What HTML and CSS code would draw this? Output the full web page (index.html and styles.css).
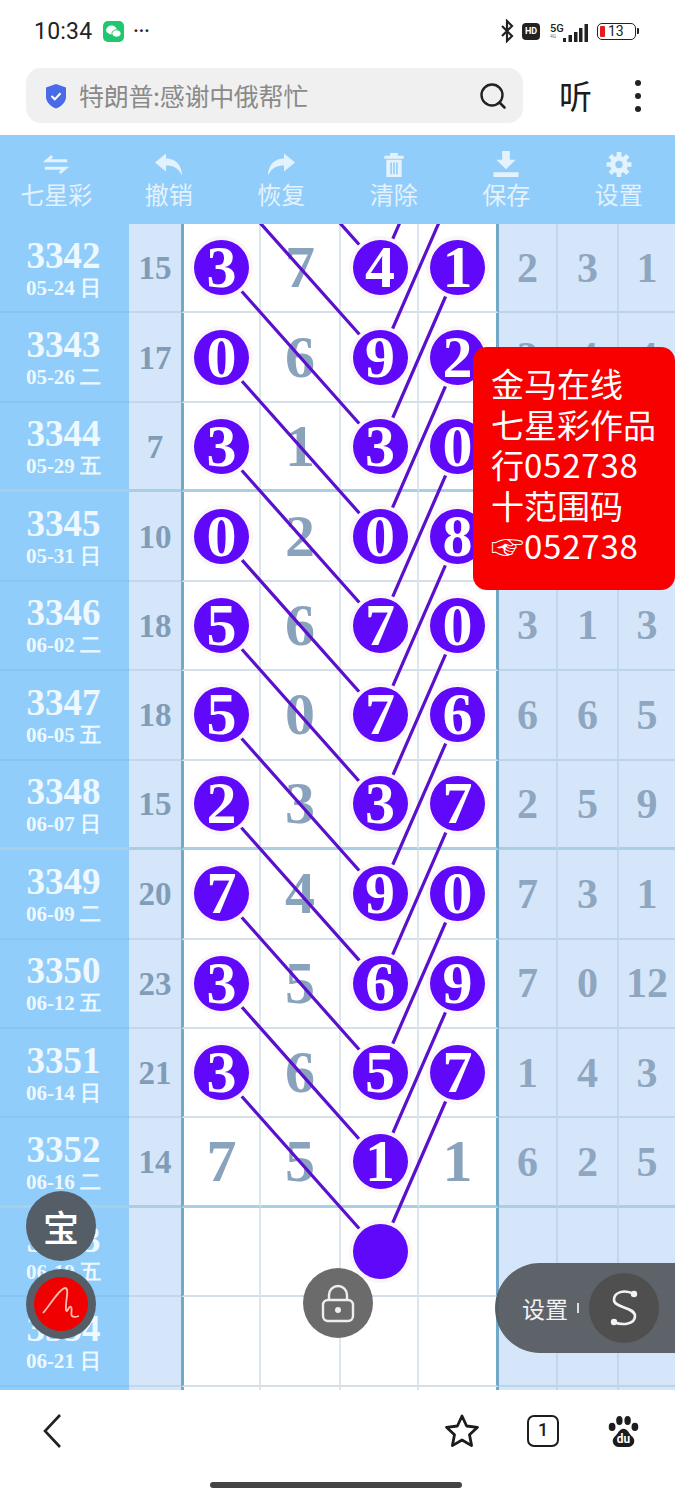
FILE: index.html
```html
<!DOCTYPE html>
<html lang="zh">
<head>
<meta charset="utf-8">
<title>七星彩</title>
<link rel="stylesheet" href="styles.css">
</head>
<body>
<div class="page">
  <header class="status">
    <span class="time">10:34</span>
    <svg class="wechat" viewBox="0 0 21 21"><rect width="21" height="21" rx="5" fill="#1fc76f"/><ellipse cx="8.500" cy="9" rx="5.400" ry="4.400" fill="#fff"/><ellipse cx="13.500" cy="12.500" rx="4.600" ry="3.700" fill="#fff" stroke="#1fc76f"/></svg>
    <span class="more">···</span>
    <span class="status-right">
      <svg class="bt" viewBox="0 0 14 24"><path d="M2 7l10 10-5 5V2l5 5L2 17" fill="none" stroke="#222" stroke-width="2.200"/></svg>
      <span class="hd">HD</span>
      <span class="net"><span class="g5">5G</span><span class="g46">4G</span></span>
      <svg class="signal" viewBox="0 0 25 18"><path d="M0 14h3v4H0zM5.500 11h3.500v7H5.500zM11 8h3.500v10H11zM16 4h3.500v14H16zM21.500 0H25v18h-3.500z" fill="#222"/></svg>
      <span class="battery"><span class="bat-level"></span><span class="bat-num">13</span></span><span class="bat-cap"></span>
    </span>
  </header>

  <div class="addr-row">
    <div class="addr">
      <svg class="shield" viewBox="0 0 24 26"><path d="M12 1l10 3.500v9c0 6-5 10-10 12-5-2-10-6-10-12v-9z" fill="#4a6be8"/><path d="M7.500 13l3.300 3.300 5.800-6" fill="none" stroke="#fff" stroke-width="2"/></svg>
      <span class="addr-text">特朗普:感谢中俄帮忙</span>
      <svg class="search" viewBox="0 0 28 28"><circle cx="13" cy="13" r="10.500" fill="none" stroke="#222" stroke-width="2.400"/><path d="M20.500 20.500l5 5" stroke="#222" stroke-width="2.600" stroke-linecap="round"/></svg>
    </div>
    <span class="listen">听</span>
    <span class="kebab"><i></i><i></i><i></i></span>
  </div>

  <nav class="toolbar">
    <div class="tool"><svg class="tool-icon" viewBox="-3 0 32 26"><path d="M25 9H3l6-5M1 17h22l-6 5" fill="none" stroke="#e4f2fd" stroke-width="3"/></svg><span>七星彩</span></div>
    <div class="tool"><svg class="tool-icon" viewBox="0 0 30 26"><path d="M12 2L1 11l11 9v-6c7 0 12 2 16 10 0-10-6-17-16-17z" fill="#e4f2fd"/></svg><span>撤销</span></div>
    <div class="tool"><svg class="tool-icon" viewBox="0 0 30 26"><path d="M18 2l11 9-11 9v-6C11 14 6 16 2 24 2 14 8 7 18 7z" fill="#e4f2fd"/></svg><span>恢复</span></div>
    <div class="tool"><svg class="tool-icon" viewBox="0 0 26 28"><path d="M3 5h20v3H3zM9 5V2h8v3zM5 9h16v18H5z" fill="#e4f2fd"/><path d="M10 12v12M13 12v12M16 12v12" stroke="#90cdfb" stroke-width="1.600"/></svg><span>清除</span></div>
    <div class="tool"><svg class="tool-icon" viewBox="0 0 30 28"><path d="M11 0h8v9h6L15 19 5 9h6zM2 22h26v5H2z" fill="#e4f2fd"/></svg><span>保存</span></div>
    <div class="tool"><svg class="tool-icon" viewBox="0 0 26 26"><path d="M13 7a6 6 0 1 0 0 12 6 6 0 0 0 0-12z" fill="none" stroke="#e4f2fd" stroke-width="5"/><path d="M13 1v6M13 19v6M1 13h6M19 13h6M4.500 4.500l4 4M17.500 17.500l4 4M21.500 4.500l-4 4M8.500 17.500l-4 4" stroke="#e4f2fd" stroke-width="4.500"/></svg><span>设置</span></div>
  </nav>

  <main class="board">
    <svg class="lines" viewBox="0 0 675 1166"><path d="M221 -134.400L380 44M221 -45L380 133.500M221 44L380 223M221 133.500L380 312.400M221 223L380 401.800M221 312.400L380 491.300M221 401.800L380 580.700M221 491.300L380 670M221 580.700L380 759.600M221 670L380 849M221 759.600L380 938.500M221 849L380 1028M458 -134.400L380 44M458 -45L380 133.500M458 44L380 223M458 133.500L380 312.400M458 223L380 401.800M458 312.400L380 491.300M458 401.800L380 580.700M458 491.300L380 670M458 580.700L380 759.600M458 670L380 849M458 759.600L380 938.500M458 849L380 1028" fill="none" stroke="#5a10cc" stroke-width="3.200"/></svg>

    <div class="row"><div class="date"><b>3342</b><small>05-24 日</small></div><div class="sum">15</div><div class="cell c1"><span class="ball">3</span></div><div class="cell c2">7</div><div class="cell c3"><span class="ball">4</span></div><div class="cell c4"><span class="ball">1</span></div><div class="side s1">2</div><div class="side s2">3</div><div class="side s3">1</div></div>
    <div class="row"><div class="date"><b>3343</b><small>05-26 二</small></div><div class="sum">17</div><div class="cell c1"><span class="ball">0</span></div><div class="cell c2">6</div><div class="cell c3"><span class="ball">9</span></div><div class="cell c4"><span class="ball">2</span></div><div class="side s1">3</div><div class="side s2">4</div><div class="side s3">4</div></div>
    <div class="row major"><div class="date"><b>3344</b><small>05-29 五</small></div><div class="sum">7</div><div class="cell c1"><span class="ball">3</span></div><div class="cell c2">1</div><div class="cell c3"><span class="ball">3</span></div><div class="cell c4"><span class="ball">0</span></div><div class="side s1"></div><div class="side s2"></div><div class="side s3"></div></div>
    <div class="row"><div class="date"><b>3345</b><small>05-31 日</small></div><div class="sum">10</div><div class="cell c1"><span class="ball">0</span></div><div class="cell c2">2</div><div class="cell c3"><span class="ball">0</span></div><div class="cell c4"><span class="ball">8</span></div><div class="side s1"></div><div class="side s2"></div><div class="side s3"></div></div>
    <div class="row"><div class="date"><b>3346</b><small>06-02 二</small></div><div class="sum">18</div><div class="cell c1"><span class="ball">5</span></div><div class="cell c2">6</div><div class="cell c3"><span class="ball">7</span></div><div class="cell c4"><span class="ball">0</span></div><div class="side s1">3</div><div class="side s2">1</div><div class="side s3">3</div></div>
    <div class="row"><div class="date"><b>3347</b><small>06-05 五</small></div><div class="sum">18</div><div class="cell c1"><span class="ball">5</span></div><div class="cell c2">0</div><div class="cell c3"><span class="ball">7</span></div><div class="cell c4"><span class="ball">6</span></div><div class="side s1">6</div><div class="side s2">6</div><div class="side s3">5</div></div>
    <div class="row major"><div class="date"><b>3348</b><small>06-07 日</small></div><div class="sum">15</div><div class="cell c1"><span class="ball">2</span></div><div class="cell c2">3</div><div class="cell c3"><span class="ball">3</span></div><div class="cell c4"><span class="ball">7</span></div><div class="side s1">2</div><div class="side s2">5</div><div class="side s3">9</div></div>
    <div class="row"><div class="date"><b>3349</b><small>06-09 二</small></div><div class="sum">20</div><div class="cell c1"><span class="ball">7</span></div><div class="cell c2">4</div><div class="cell c3"><span class="ball">9</span></div><div class="cell c4"><span class="ball">0</span></div><div class="side s1">7</div><div class="side s2">3</div><div class="side s3">1</div></div>
    <div class="row"><div class="date"><b>3350</b><small>06-12 五</small></div><div class="sum">23</div><div class="cell c1"><span class="ball">3</span></div><div class="cell c2">5</div><div class="cell c3"><span class="ball">6</span></div><div class="cell c4"><span class="ball">9</span></div><div class="side s1">7</div><div class="side s2">0</div><div class="side s3">12</div></div>
    <div class="row"><div class="date"><b>3351</b><small>06-14 日</small></div><div class="sum">21</div><div class="cell c1"><span class="ball">3</span></div><div class="cell c2">6</div><div class="cell c3"><span class="ball">5</span></div><div class="cell c4"><span class="ball">7</span></div><div class="side s1">1</div><div class="side s2">4</div><div class="side s3">3</div></div>
    <div class="row major"><div class="date"><b>3352</b><small>06-16 二</small></div><div class="sum">14</div><div class="cell c1">7</div><div class="cell c2">5</div><div class="cell c3"><span class="ball">1</span></div><div class="cell c4">1</div><div class="side s1">6</div><div class="side s2">2</div><div class="side s3">5</div></div>
    <div class="row"><div class="date"><b>3353</b><small>06-19 五</small></div><div class="sum"></div><div class="cell c1"></div><div class="cell c2"></div><div class="cell c3"><span class="ball"></span></div><div class="cell c4"></div><div class="side s1"></div><div class="side s2"></div><div class="side s3"></div></div>
    <div class="row"><div class="date"><b>3354</b><small>06-21 日</small></div><div class="sum"></div><div class="cell c1"></div><div class="cell c2"></div><div class="cell c3"></div><div class="cell c4"></div><div class="side s1"></div><div class="side s2"></div><div class="side s3"></div></div>
    <div class="row"><div class="date"></div><div class="sum"></div><div class="cell c1"></div><div class="cell c2"></div><div class="cell c3"></div><div class="cell c4"></div><div class="side s1"></div><div class="side s2"></div><div class="side s3"></div></div>

    <aside class="promo">金马在线<br>七星彩作品<br>行<span class="num">052738</span><br>十范围码<br><span class="hand">☞</span><span class="num">052738</span></aside>

    <div class="fab fab-bao">宝</div>
    <div class="fab fab-sign"><svg viewBox="0 0 54 54"><circle cx="27" cy="27" r="27" fill="#f00000"/><path d="M9 36C17 27 25 12 31 11c5 0 0 13 1 22 1 4 3-5 5-3 2 2-1 7 1 9 1 1 4 1 7 0" fill="none" stroke="#f8c0b0" stroke-width="1.800"/></svg></div>
    <div class="fab fab-lock"><svg viewBox="0 0 34 40"><rect x="2" y="17" width="30" height="21" rx="5" fill="none" stroke="#eee" stroke-width="2.400"/><path d="M8 17v-5a9 9 0 0 1 18 0v5" fill="none" stroke="#eee" stroke-width="2.400"/><circle cx="17" cy="27" r="3" fill="#eee"/></svg></div>
    <div class="pill"><span class="pill-text">设置</span><i class="pill-bar"></i><span class="pill-s"><svg viewBox="0 0 30 40"><path d="M25 6C15 1 5 4 5 12c0 8 21 7 21 16 0 8-12 10-21 6" fill="none" stroke="#f2f2f2" stroke-width="2.600"/><circle cx="25" cy="6" r="3.200" fill="#f2f2f2"/><circle cx="5" cy="34" r="3.200" fill="#f2f2f2"/></svg></span></div>
  </main>

  <footer class="bottom">
    <div class="bottom-icons">
      <svg class="back" viewBox="0 0 20 36"><path d="M18 2L3 18l15 16" fill="none" stroke="#222" stroke-width="2.600"/></svg>
      <span class="spacer"></span>
      <svg class="star" viewBox="0 0 36 36"><path d="M18 3l4.600 10 10.900 1.300-8 7.500 2.100 10.800L18 27l-9.600 5.600 2.100-10.800-8-7.500L13.400 13z" fill="none" stroke="#1c1c1c" stroke-width="2.800" stroke-linejoin="round"/></svg>
      <span class="tabs">1</span>
      <svg class="paw" viewBox="0 0 34 36"><ellipse cx="4.500" cy="13" rx="3.700" ry="4.500"/><ellipse cx="12.500" cy="6" rx="3.500" ry="5"/><ellipse cx="21.500" cy="6" rx="3.500" ry="5"/><ellipse cx="29.500" cy="13" rx="3.700" ry="4.500"/><path d="M17 15c5 0 6 6 10 9 4 4 1 11-5 11H12c-6 0-9-7-5-11 4-3 5-9 10-9z"/><text x="17" y="31" text-anchor="middle" class="paw-text">du</text></svg>
    </div>
    <div class="home-bar"></div>
  </footer>
</div>
</body>
</html>
```

FILE: styles.css
```css
* { box-sizing: border-box; }
html, body { margin: 0; padding: 0; background: #fff; }
body { font-family: "Noto Sans CJK SC", "Noto Sans", sans-serif; }
.page { width: 675px; height: 1500px; display: flex; flex-direction: column; overflow: hidden; }

/* status bar */
.status { height: 60px; display: flex; align-items: center; padding: 2px 36px 0 34px; color: #222; }
.time { font-family: Roboto, sans-serif; font-size: 23px; letter-spacing: .2px; }
.wechat { width: 21px; height: 21px; margin-left: 11px; }
.more { font-family: Roboto, sans-serif; font-size: 18px; font-weight: 700; margin-left: 9px; line-height: 1; }
.status-right { margin-left: auto; display: flex; align-items: center; }
.bt { width: 14px; height: 24px; }
.hd { width: 18px; height: 17px; margin-left: 8px; background: #222; color: #fff; border-radius: 4px; font: 700 9px/17px Roboto, sans-serif; text-align: center; }
.net { display: flex; flex-direction: column; margin-left: 10px; width: 15px; font-family: Roboto, sans-serif; line-height: 1; }
.g5 { font-size: 11px; font-weight: 500; }
.g46 { font-size: 5px; color: #777; }
.signal { width: 25px; height: 18px; align-self: flex-end; margin-bottom: 1px; margin-left: -2px; }
.battery { width: 39px; height: 17px; margin-left: 9px; border: 1.500px solid #222; border-radius: 5px; display: flex; align-items: center; padding-left: 2px; }
.bat-level { width: 5px; height: 11px; background: #e02020; border-radius: 1px; }
.bat-num { font: 400 14px/1 Roboto, sans-serif; margin-left: 3px; }
.bat-cap { width: 2px; height: 6px; background: #222; margin-left: 1px; border-radius: 0 1px 1px 0; }

/* address */
.addr-row { height: 75px; display: flex; align-items: flex-start; padding: 8px 0 0 26px; }
.addr { width: 497px; height: 55px; background: #f0f0f0; border-radius: 15px; display: flex; align-items: center; padding: 0 16px 0 18px; }
.shield { width: 24px; height: 26px; flex: none; }
.addr-text { margin-left: 11px; font-size: 25px; letter-spacing: -.3px; color: #8a8a8a; line-height: 1; }
.search { width: 28px; height: 28px; margin-left: auto; }
.listen { font-size: 33px; color: #1c1c1c; margin-left: 36px; width: 35px; line-height: 55px; }
.kebab { margin-left: 41px; height: 55px; display: flex; flex-direction: column; justify-content: center; gap: 7px; }
.kebab i { width: 6px; height: 6px; border-radius: 50%; background: #222; display: block; }

/* toolbar */
.toolbar { height: 89px; background: #90cdfb; display: grid; grid-template-columns: repeat(6, 112.500px); }
.tool { display: flex; flex-direction: column; align-items: center; padding-top: 16px; color: #e4f2fd; font-size: 24px; line-height: 30px; }
.tool-icon { height: 27px; width: 30px; margin-bottom: 1px; }

/* board */
.board { position: relative; height: 1166px; overflow: hidden; background: #fff; }
.lines { position: absolute; left: 0; top: 0; width: 675px; height: 1166px; z-index: 1; overflow: visible; }
.row { height: 89.450px; display: grid; grid-template-columns: 129px 52px 80px 80px 78px 80px 59px 61px 56px; }
.row > div { display: flex; align-items: center; justify-content: center; font-family: "Liberation Serif", serif; font-weight: 700; border-bottom: 2px solid #d5dfe9; }
.row.major > div { border-bottom-width: 3px; border-bottom-color: #a9cfe4; }
.row > .date { flex-direction: column; background: #90cdfb; color: #eef8ff; border-bottom-color: #87c5f3; padding: 2px 2px 0 0; }
.date b { font-size: 37px; line-height: 37px; }
.date small { font-size: 21px; line-height: 25px; font-weight: 700; margin-top: 2px; }
.row > .sum { background: #d5e6fa; color: #7f9cb8; font-size: 33px; border-bottom-color: #c2d7ec; padding-top: 2px; }
.row > .cell { font-size: 60px; color: #8aa3bc; border-right: 2px solid #dbe6ee; }
.row > .c1 { border-left: 3px solid #72a9c9; }
.row > .c3 { padding-left: 2px; }
.row > .c4 { border-right: 3px solid #72a9c9; }
.row > .side { background: #d5e6fa; color: #8ea6c0; font-size: 42px; border-right: 2px solid #c2d7ec; border-bottom-color: #bcd4e8; }
.row > .s3 { border-right: 0; }
.ball { position: relative; z-index: 2; width: 55px; height: 55px; border-radius: 50%; background: #6008fa; color: #fff; box-shadow: 0 0 0 4px #faf5f6; font-size: 60px; line-height: 55px; text-align: center; display: block; }

/* promo */
.promo { position: absolute; z-index: 3; left: 473px; top: 123px; width: 202px; height: 243px; background: #f80000; border-radius: 14px; color: #fff; padding: 16px 0 0 18px; font-size: 33px; line-height: 40.500px; font-family: "Noto Sans CJK SC", sans-serif; }
.num { letter-spacing: .8px; }
.hand { display: inline-block; width: 33px; line-height: 1; }

/* floating buttons */
.fab { position: absolute; z-index: 4; width: 70px; height: 70px; border-radius: 50%; display: flex; align-items: center; justify-content: center; }
.fab-bao { left: 26px; top: 967px; background: #555e66; color: #fff; font-size: 36px; font-weight: 500; }
.fab-sign { left: 26px; top: 1045px; background: #555e66; }
.fab-sign svg { width: 54px; height: 54px; }
.fab-lock { left: 303px; top: 1044px; background: #6b6b6b; }
.fab-lock svg { width: 34px; height: 40px; }
.pill { position: absolute; z-index: 4; left: 495px; top: 1039px; width: 190px; height: 90px; border-radius: 45px 0 0 45px; background: rgba(84, 88, 92, .92); display: flex; align-items: center; padding-left: 27px; color: #f2f2f2; font-size: 23px; }
.pill-text { line-height: 1; }
.pill-bar { width: 2px; height: 10px; background: #ddd; margin-left: 9px; }
.pill-s { width: 70px; height: 70px; border-radius: 50%; background: #4f4f4f; margin-left: 10px; display: flex; align-items: center; justify-content: center; }
.pill-s svg { width: 30px; height: 40px; }

/* bottom */
.bottom { flex: 1; background: #fff; display: flex; flex-direction: column; }
.bottom-icons { display: flex; align-items: center; height: 82px; padding: 0 0 0 42px; }
.back { width: 20px; height: 36px; }
.spacer { flex: 1; }
.star { width: 36px; height: 36px; }
.tabs { width: 32px; height: 32px; border: 2.800px solid #1c1c1c; border-radius: 7px; margin-left: 47px; text-align: center; font: 500 18px/26px Roboto, sans-serif; color: #1c1c1c; }
.paw { width: 31px; height: 33px; margin-left: 49px; margin-right: 36px; fill: #1c1c1c; }
.paw-text { font: 700 13px Roboto, sans-serif; fill: #fff; }
.home-bar { width: 252px; height: 6px; border-radius: 3px; background: #444; margin: 10px 0 0 210px; }
```
